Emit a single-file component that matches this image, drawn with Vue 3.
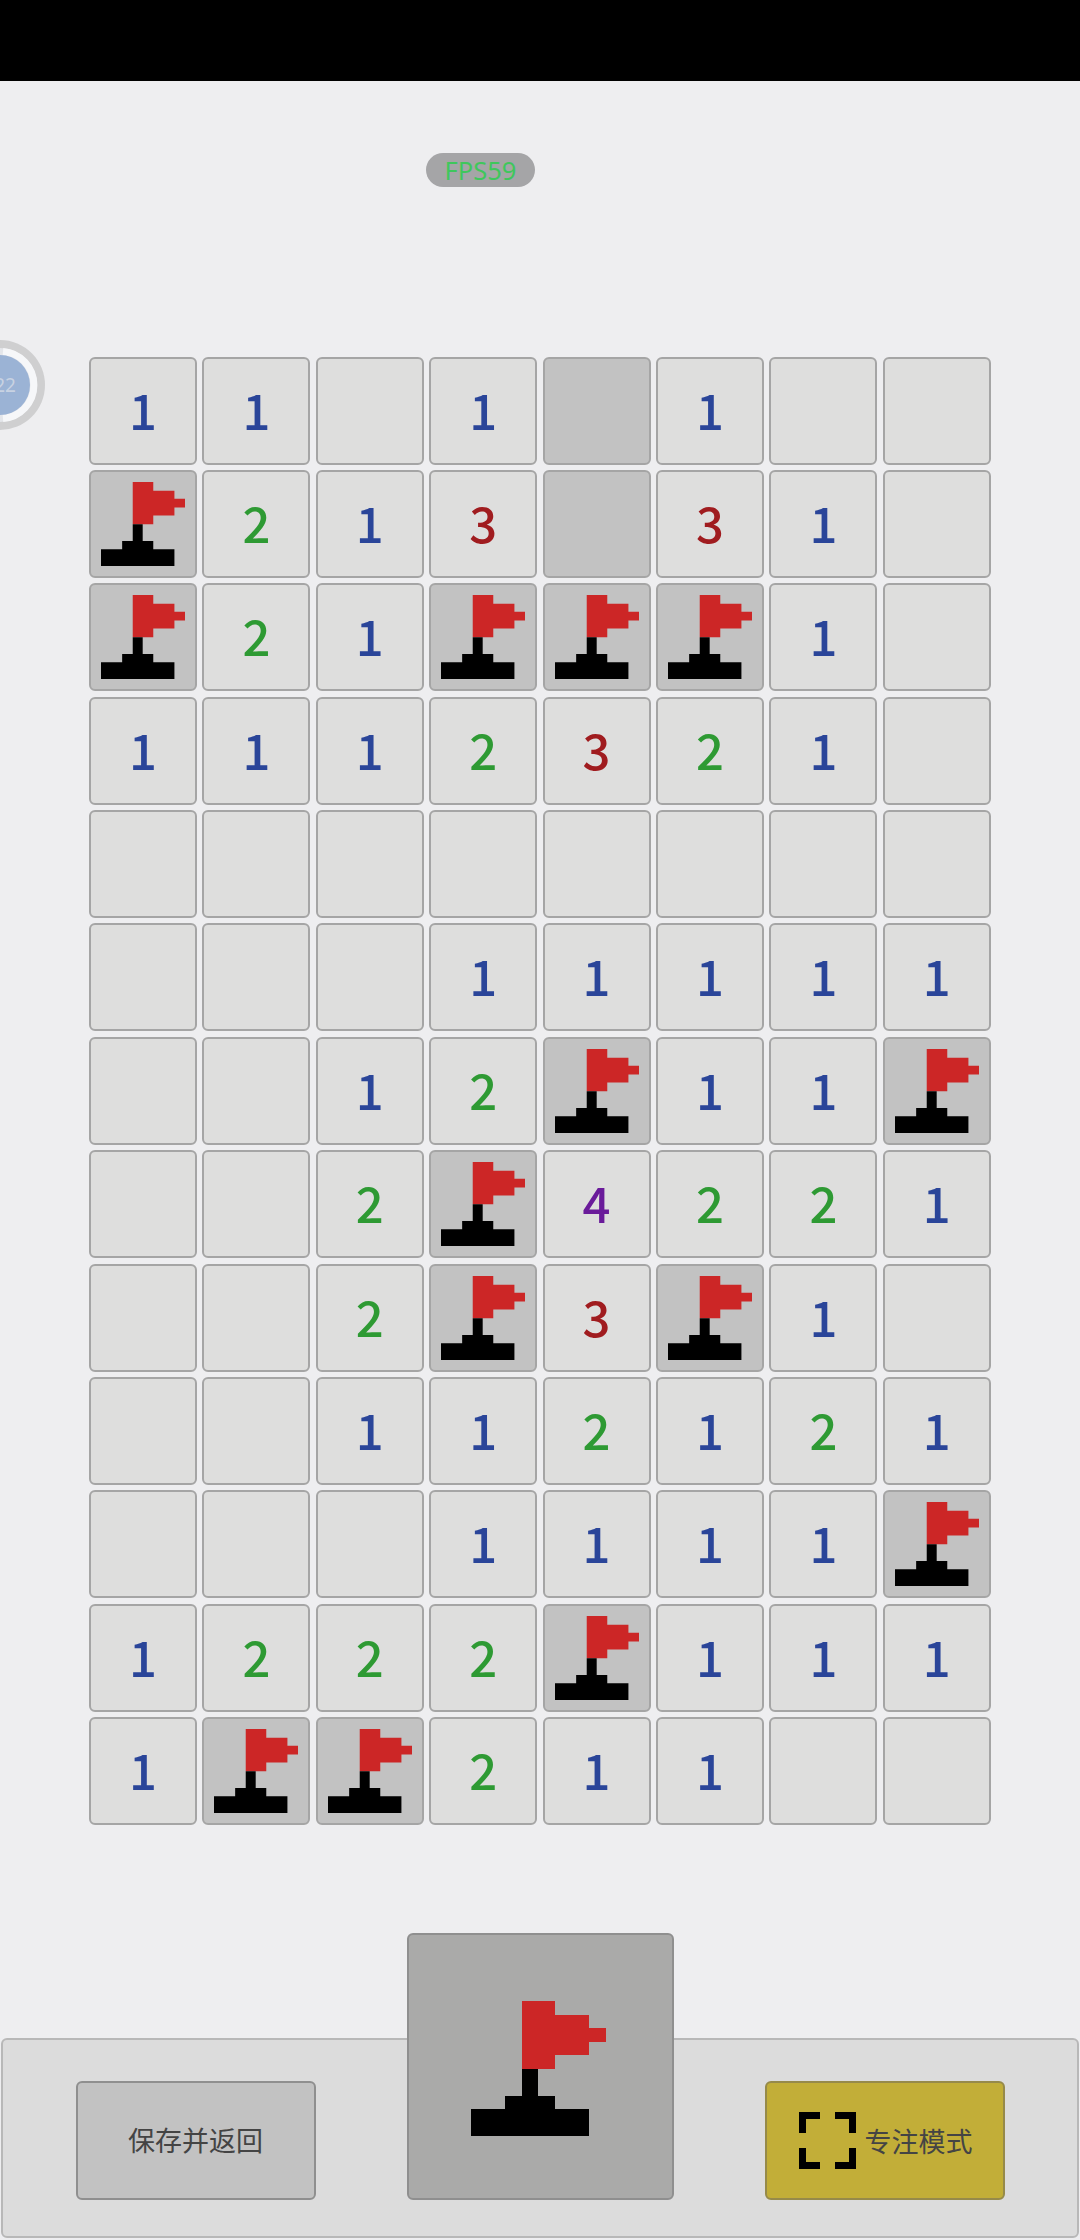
<script setup>
const rows = [
  '11_1G1__',
  'F213G31_',
  'F21FFF1_',
  '1112321_',
  '________',
  '___11111',
  '__12F11F',
  '__2F4221',
  '__2F3F1_',
  '__112121',
  '___1111F',
  '1222F111',
  '1FF211__',
]
const cells = rows.flatMap((r) => r.split(''))
</script>

<template>
  <div class="page">
    <div class="status"></div>
    <div class="fps-row"><div class="fps">FPS59</div></div>

    <svg class="timer" width="50" height="100" viewBox="0 0 50 100">
      <circle cx="0" cy="50" r="45" fill="#cfcfd0" />
      <circle cx="0" cy="50" r="37" fill="#e4e6ea" />
      <path d="M3 16.6 A33.5 33.5 0 0 1 3 83.4" fill="none" stroke="#f6f7f9" stroke-width="7" />
      <circle cx="0" cy="50" r="30" fill="#9bb3d5" />
      <text x="5" y="57" class="timer-text" text-anchor="middle">22</text>
    </svg>

    <div class="board">
      <div
        v-for="(c, i) in cells"
        :key="i"
        class="cell"
        :class="{ dark: c === 'F' || c === 'G', ['n' + c]: c >= '1' && c <= '4' }"
      >
        <svg v-if="c === 'F'" class="flag" viewBox="0 0 135 135" width="84" height="84">
          <path fill="#cc2626" d="M51 0H84V14H118V27H135V41H118V54H84V68H51Z" />
          <path fill="#000" d="M51 68H67V95H84V108H118V135H0V108H34V95H51Z" />
        </svg>
        <span v-else-if="c >= '1' && c <= '4'" class="num">{{ c }}</span>
      </div>
    </div>

    <div class="bar">
      <button class="btn save">保存并返回</button>
      <button class="mode">
        <svg viewBox="0 0 135 135" width="135" height="135">
          <path fill="#cc2626" d="M51 0H84V14H118V27H135V41H118V54H84V68H51Z" />
          <path fill="#000" d="M51 68H67V95H84V108H118V135H0V108H34V95H51Z" />
        </svg>
      </button>
      <button class="btn focus">
        <svg class="focus-icon" viewBox="0 0 57 57" width="57" height="57">
          <path fill="none" stroke="#000" stroke-width="7" d="M21 3.5H3.5V21M36 3.5H53.5V21M3.5 36V53.5H21M53.5 36V53.5H36" />
        </svg>
        <span>专注模式</span>
      </button>
    </div>
  </div>
</template>

<style scoped>
.page {
  position: relative;
  width: 1080px;
  height: 2240px;
  background: #eeeef0;
  overflow: hidden;
  font-family: "Noto Sans CJK SC", "Noto Sans", sans-serif;
}
.status {
  height: 81px;
  background: #000;
}
.fps-row {
  padding: 72px 0 0 426px;
}
.fps {
  width: 109px;
  height: 34px;
  border-radius: 17px;
  background: #a5a5a7;
  color: #3fc75c;
  font-size: 25.5px;
  line-height: 34px;
  text-align: center;
  font-family: "Noto Sans", sans-serif;
}
.timer {
  position: absolute;
  left: 0;
  top: 335px;
}
.timer-text {
  font-family: "Noto Sans", sans-serif;
  font-size: 19px;
  fill: #c8d2e2;
}
.board {
  display: grid;
  grid-template-columns: repeat(8, 108px);
  grid-auto-rows: 108px;
  gap: 5.4px;
  margin: 169.5px 0 0 89px;
}
.cell {
  box-sizing: border-box;
  display: flex;
  align-items: center;
  justify-content: center;
  background: #dededd;
  border: 2px solid #a5a5a5;
  border-radius: 6px;
}
.num {
  font-size: 49px;
  font-weight: 500;
  line-height: 1;
  margin-bottom: 5px;
}
.cell.dark {
  background: #c2c2c2;
}
.n1 { color: #2a4599; }
.n2 { color: #2e9a33; }
.n3 { color: #a01c1f; }
.n4 { color: #6a1b9a; }
.bar {
  position: relative;
  box-sizing: border-box;
  display: flex;
  justify-content: space-between;
  align-items: flex-end;
  width: 1078px;
  height: 200px;
  margin: 212.5px 0 0 1px;
  padding: 0 72.5px 36px;
  background: #dcdcdc;
  border: 2px solid #b8b8b8;
  border-radius: 6px;
}
.btn,
.mode {
  box-sizing: border-box;
  display: flex;
  align-items: center;
  justify-content: center;
  padding: 0;
  font-family: inherit;
  border-radius: 6px;
  border: 2px solid #8f8f8f;
}
.btn {
  width: 240px;
  height: 119px;
  font-size: 27px;
  color: #444;
}
.save {
  background: #c2c2c2;
  padding-bottom: 2px;
}
.mode {
  width: 267px;
  height: 267px;
  background: #aaaaa9;
}
.mode svg {
  margin: 5px 3px 0 0;
}
.focus {
  background: #c2ae38;
  border-color: #968a4a;
  gap: 9px;
  padding-left: 2px;
}
.focus-icon {
  flex: none;
}
</style>
